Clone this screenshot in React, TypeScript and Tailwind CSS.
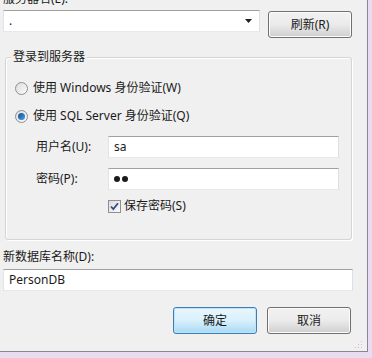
import React from "react";

const font = { fontFamily: '"Segoe UI", "Noto Sans", "Noto Sans CJK SC", sans-serif' };

const inputClass =
  "h-[22px] border border-[#abadb3] border-t-[#a0a0a0] border-l-[#e2e3ea] border-r-[#dbdfe6] border-b-[#e3e9ef] bg-white px-[5px] flex items-center text-[12px] text-[#1a1a1a]";

function Radio({ checked }: { checked?: boolean }) {
  return (
    <span className="relative flex h-[13px] w-[13px] items-center justify-center rounded-full border border-[#8f8f8f] bg-gradient-to-br from-[#dcdcdc] to-[#fbfbfb]">
      {checked ? (
        <span className="h-[7px] w-[7px] rounded-full bg-gradient-to-br from-[#0a4f8f] to-[#4aa0e8]" />
      ) : null}
    </span>
  );
}

function Button({ label, primary }: { label: string; primary?: boolean }) {
  return (
    <div
      className={
        primary
          ? "flex h-[27px] w-[84px] items-center justify-center rounded-[3px] border border-[#3c7fb1] bg-gradient-to-b from-[#eaf6fd] via-[#d9f0fc] to-[#a7d9f5] text-[12px] text-[#1a1a1a] shadow-[inset_0_0_0_1px_#bde4fa]"
          : "flex h-[27px] w-[84px] items-center justify-center rounded-[3px] border border-[#707070] bg-gradient-to-b from-[#f2f2f2] via-[#ebebeb] to-[#cfcfcf] text-[12px] text-[#1a1a1a] shadow-[inset_0_0_0_1px_#fcfcfc]"
      }
    >
      {label}
    </div>
  );
}

export default function App() {
  return (
    <div className="flex h-[358px] w-[372px] flex-col overflow-hidden bg-[#eadcf0]" style={font}>
      <div className="flex h-[352px] w-[368px] border-r border-b border-[#8d8592]">
        <div className="relative flex w-[367px] flex-col bg-[#f0f0f0] text-[12px] text-[#1a1a1a]">
          <div className="mt-[-9px] h-[16px] pl-[3px] leading-[16px]">服务器名(E):</div>
          <div className="mt-[3px] flex items-start">
            <div className={`${inputClass} ml-[3px] w-[257px] justify-between`}>
              <span className="leading-none">.</span>
              <svg width="8" height="5" viewBox="0 0 8 5" className="mr-[1px]">
                <path d="M0 0h7L3.5 4z" fill="#202020" />
              </svg>
            </div>
            <div className="ml-[8px] mt-[1px]">
              <Button label="刷新(R)" />
            </div>
          </div>

          <div className="relative ml-[5px] mt-[19px] h-[183px] w-[347px] rounded-[3px] border border-[#d5d5d5] shadow-[inset_1px_1px_0_#fff,1px_1px_0_#fff]">
            <div className="absolute left-[5px] top-[-9px] bg-[#f0f0f0] px-[2px] leading-[16px]">登录到服务器</div>
            <div className="mt-[21px] flex items-center pl-[9px]">
              <Radio />
              <span className="ml-[5px]">使用 Windows 身份验证(W)</span>
            </div>
            <div className="mt-[10px] flex items-center pl-[9px]">
              <Radio checked />
              <span className="ml-[5px]">使用 SQL Server 身份验证(Q)</span>
            </div>
            <div className="mt-[11px] flex items-center">
              <span className="w-[102px] pl-[30px]">用户名(U):</span>
              <div className={`${inputClass} w-[231px]`}>sa</div>
            </div>
            <div className="mt-[10px] flex items-center">
              <span className="w-[102px] pl-[30px]">密码(P):</span>
              <div className={`${inputClass} w-[231px] gap-[2px]`}>
                <span className="h-[6px] w-[6px] rounded-full bg-[#1a1a1a]" />
                <span className="h-[6px] w-[6px] rounded-full bg-[#1a1a1a]" />
              </div>
            </div>
            <div className="mt-[7px] flex items-center pl-[102px]">
              <span className="flex h-[13px] w-[13px] items-center justify-center border border-[#8e8f8f] bg-gradient-to-br from-[#dcdcdc] to-[#fafafa]">
                <svg width="9" height="9" viewBox="0 0 9 9">
                  <path d="M1 4.5l2.3 2.5L8 1.2" fill="none" stroke="#2f4f8c" strokeWidth="1.8" />
                </svg>
              </span>
              <span className="ml-[3px]">保存密码(S)</span>
            </div>
          </div>

          <div className="mt-[9px] pl-[3px] leading-[16px]">新数据库名称(D):</div>
          <div className={`${inputClass} ml-[3px] mt-[4px] w-[350px]`}>PersonDB</div>

          <div className="mt-[16px] flex justify-end gap-[10px] pr-[16px]">
            <Button label="确定" primary />
            <Button label="取消" />
          </div>

          <svg width="9" height="9" viewBox="0 0 9 9" className="absolute bottom-[2px] right-[4px]">
            <g fill="#c4c4c4">
              <rect x="7" y="1" width="1" height="1" />
              <rect x="4" y="4" width="1" height="1" />
              <rect x="7" y="4" width="1" height="1" />
              <rect x="1" y="7" width="1" height="1" />
              <rect x="4" y="7" width="1" height="1" />
              <rect x="7" y="7" width="1" height="1" />
            </g>
          </svg>
        </div>
      </div>
    </div>
  );
}
